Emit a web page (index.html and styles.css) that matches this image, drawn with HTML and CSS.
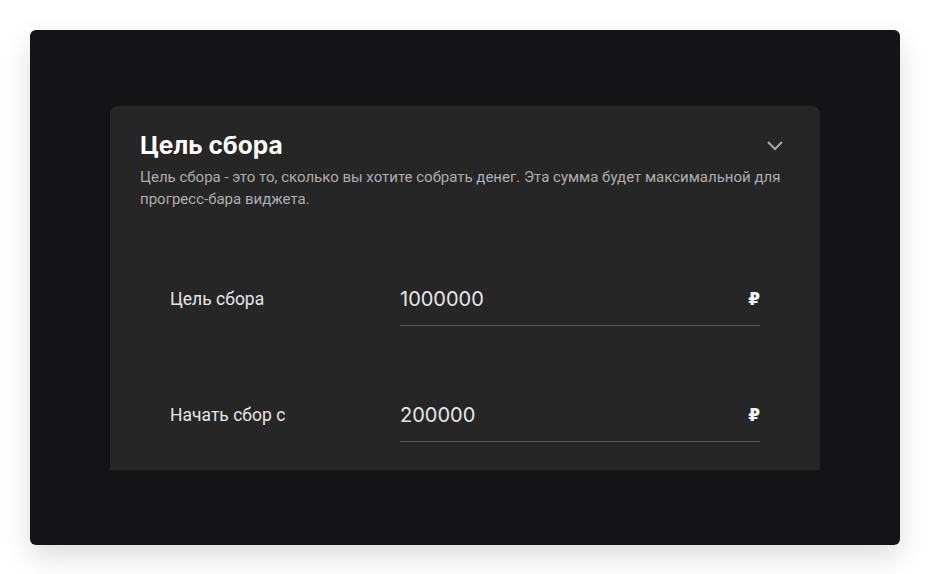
FILE: index.html
```html
<!DOCTYPE html>
<html lang="ru">
<head>
    <meta charset="UTF-8">
    <title>Цель сбора</title>
    <link rel="stylesheet" href="styles.css">
</head>
<body>
    <!-- Dark frame -->
    <div class="frame">
        <div class="card">
            <!-- Card header -->
            <div class="card_header">
                <h2 class="card_title">Цель сбора</h2>
                <svg class="chevron" width="24" height="24" viewBox="0 0 24 24">
                    <path d="M5 9l7 7 7-7" fill="none" stroke="#a8a8a8" stroke-width="2"/>
                </svg>
            </div>
            <p class="card_desc">Цель сбора - это то, сколько вы хотите собрать денег. Эта сумма будет максимальной для прогресс-бара виджета.</p>

            <!-- Goal inputs -->
            <div class="goal_form">
                <div class="goal_row">
                    <label class="goal_label" for="goal_total">Цель сбора</label>
                    <div class="goal_field">
                        <input class="goal_input" type="text" id="goal_total" value="1000000">
                        <span class="currency">₽</span>
                    </div>
                </div>
                <div class="goal_row">
                    <label class="goal_label" for="goal_start">Начать сбор с</label>
                    <div class="goal_field">
                        <input class="goal_input" type="text" id="goal_start" value="200000">
                        <span class="currency">₽</span>
                    </div>
                </div>
            </div>
        </div>
    </div>
</body>
</html>
```

FILE: styles.css
```css
/* Page */
body {
    margin: 0;
    padding: 30px;
    background: #ffffff;
    font-family: 'Roboto', 'Noto Sans', sans-serif;
}

.frame {
    height: 515px;
    box-sizing: border-box;
    padding: 76px 80px 75px;
    background: #141416;
    border-radius: 6px;
    box-shadow: 0 12px 30px rgba(0, 0, 0, 0.14);
}

/* Card */
.card {
    height: 100%;
    overflow: hidden;
    background: #262626;
    border-radius: 8px 8px 0 0;
    padding: 25px 30px 0;
    box-sizing: border-box;
}

.card_header {
    display: flex;
    justify-content: space-between;
    align-items: center;
    margin-right: 3px;
}

.card_title {
    margin: 0;
    font-family: 'Inter', sans-serif;
    font-size: 24.5px;
    line-height: 28px;
    font-weight: 700;
    color: #ffffff;
}

.chevron {
    display: block;
}

.card_desc {
    margin: 7px 0 0;
    font-size: 15px;
    line-height: 22px;
    color: #aeaeae;
}

/* Form */
.goal_form {
    display: flex;
    flex-direction: column;
    gap: 65px;
    padding: 65px 30px 0;
}

.goal_row {
    display: flex;
    align-items: flex-start;
}

.goal_label {
    width: 230px;
    flex-shrink: 0;
    padding-top: 12px;
    font-size: 17.5px;
    line-height: 24px;
    color: #e6e6e6;
}

.goal_field {
    flex: 1;
    display: flex;
    align-items: center;
    padding: 12px 0 14px;
    border-bottom: 1px solid #5a5a5a;
}

.goal_input {
    flex: 1;
    min-width: 0;
    padding: 0;
    border: none;
    outline: none;
    background: transparent;
    font-family: 'Inter', sans-serif;
    font-size: 20px;
    line-height: 24px;
    color: #e8e8e8;
}

.currency {
    font-family: 'DejaVu Sans', sans-serif;
    font-size: 17px;
    font-weight: 700;
    line-height: 24px;
    color: #f4f4f4;
}
```
